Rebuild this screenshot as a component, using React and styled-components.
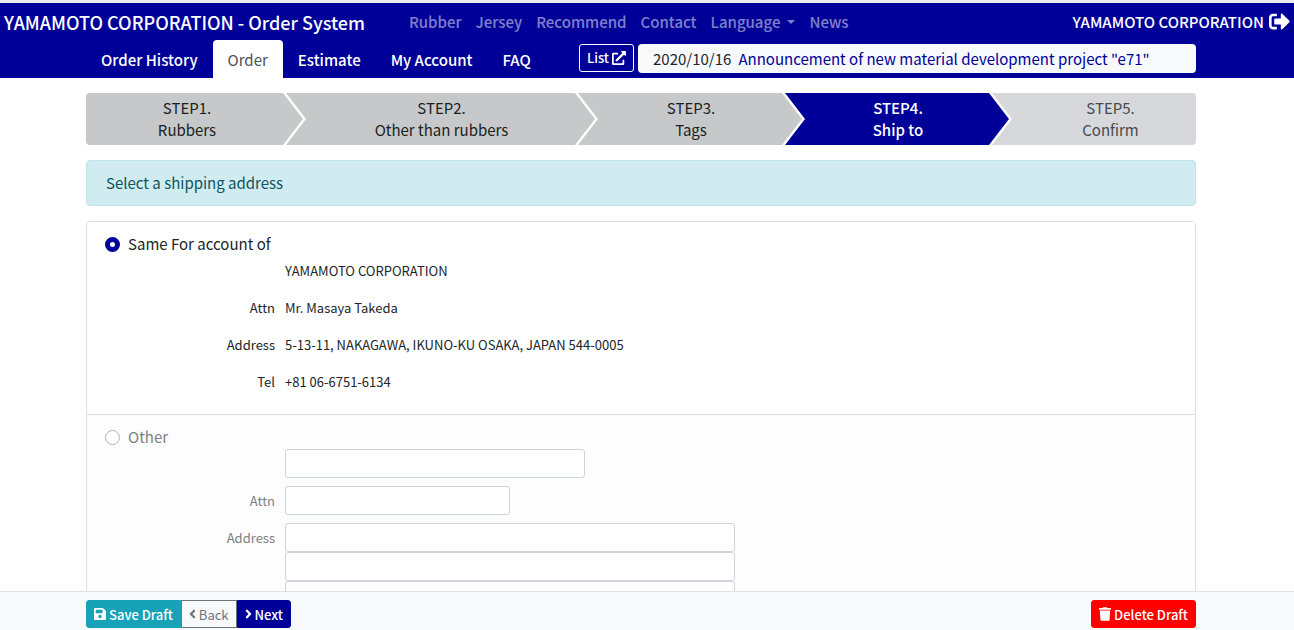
import React, { useState } from "react";
import styled, { createGlobalStyle } from "styled-components";
import {
  FaAngleLeft,
  FaAngleRight,
  FaExternalLinkAlt,
  FaSave,
  FaSignOutAlt,
  FaTrash,
} from "react-icons/fa";

const navy = "#000099";

const GlobalStyle = createGlobalStyle`
  *, *::before, *::after {
    box-sizing: border-box;
  }
  body {
    margin: 0;
    background: #fff;
    color: #212529;
    font-family: "Noto Sans CJK JP", "Noto Sans", sans-serif;
    font-size: 15px;
    line-height: 24px;
  }
  a {
    text-decoration: none;
    white-space: nowrap;
  }
  button, input {
    font-family: inherit;
  }
`;

const Page = styled.div`
  display: flex;
  flex-direction: column;
  height: 100vh;
`;

const Gutter = styled.div`
  padding: 0 12px 0 0;
`;
const Container = styled.div`
  max-width: 1110px;
  margin: 0 auto;
`;

const Header = styled.header`
  flex: none;
  background: ${navy};
  border-top: 3px solid #e9eaec;
`;
const TopBar = styled.div`
  display: flex;
  align-items: center;
  height: 37px;
  padding: 0 4px;
`;
const Brand = styled.a`
  color: #fff;
  font-size: 18px;
  font-weight: 500;
  margin-right: 44px;
`;
const TopLinks = styled.nav`
  display: flex;
  flex: 1;
  gap: 14px;
`;
const TopLink = styled.a`
  display: flex;
  align-items: center;
  gap: 7px;
  color: rgba(255, 255, 255, 0.5);
  font-weight: 500;
`;
const Caret = styled.span`
  border-top: 4px solid;
  border-left: 4px solid transparent;
  border-right: 4px solid transparent;
`;
const Account = styled.a`
  display: flex;
  align-items: center;
  gap: 5px;
  color: #fff;
  font-weight: 500;

  svg {
    font-size: 21px;
  }
`;

const TabBar = styled.div`
  display: flex;
  height: 38px;
`;
const Tabs = styled.nav`
  display: flex;
  flex: 1;
`;
const Tab = styled.a`
  padding: 7px 14px;
  border: 1px solid transparent;
  border-bottom: 0;
  border-radius: 4px 4px 0 0;
  background: ${(props) => (props.$active ? "#fff" : "transparent")};
  color: ${(props) => (props.$active ? "#495057" : "#fff")};
  font-weight: ${(props) => (props.$active ? 400 : 500)};
`;
const ListLink = styled.a`
  display: flex;
  align-items: center;
  gap: 3px;
  height: 28px;
  margin: 4px 4px 0 0;
  padding: 0 7px;
  border: 1px solid #fff;
  border-radius: 3px;
  color: #fff;
  font-size: 13px;
  font-weight: 500;

  svg {
    font-size: 14px;
  }
`;
const Notice = styled.div`
  display: flex;
  align-items: center;
  gap: 7px;
  width: 558px;
  height: 29px;
  margin-top: 4px;
  padding: 0 15px;
  border-radius: 4px;
  background: #f8f9fa;

  a {
    color: ${navy};
  }
`;

const Main = styled.main`
  flex: 1;
  min-height: 0;
  overflow-y: auto;
  scrollbar-width: none;
  padding: 15px 12px 0 0;
`;

const Steps = styled.ol`
  display: grid;
  grid-template-columns: 197fr 292fr 207fr 207fr 207fr;
  margin: 0 0 15px;
  padding: 0;
  list-style: none;
  border-radius: 4px;
  overflow: hidden;
`;
const stepColors = {
  done: "#c6c8ca",
  active: navy,
  next: "#d6d8db",
};
const textColors = {
  done: "#1b1e21",
  active: "#fff",
  next: "#464a4e",
};
const Step = styled.li`
  position: relative;
  padding: 4px 0 4px 25px;
  background: ${(props) => stepColors[props.$state]};
  color: ${(props) => textColors[props.$state]};
  font-weight: ${(props) => (props.$state === "active" ? 500 : 400)};
  line-height: 22px;
  text-align: center;

  &:first-child {
    padding-left: 5px;
  }
  &:last-child {
    padding-left: 36px;
  }
  &:not(:last-child)::before,
  &:not(:last-child)::after {
    content: "";
    position: absolute;
    z-index: 1;
    top: 0;
    left: 100%;
    height: 100%;
  }
  &::before {
    width: 23px;
    background: #fff;
    clip-path: polygon(0 0, 3px 0, 100% 50%, 3px 100%, 0 100%);
  }
  &::after {
    width: 20px;
    background: inherit;
    clip-path: polygon(0 0, 100% 50%, 0 100%);
  }
`;

const Alert = styled.div`
  margin-bottom: 15px;
  padding: 10px 19px;
  border: 1px solid #bee5eb;
  border-radius: 4px;
  background: #d1ecf1;
  color: #0c5460;
`;

const Card = styled.form`
  border: 1px solid #dfdfdf;
  border-radius: 4px;
  overflow: hidden;
`;
const Section = styled.section`
  padding: 10px 18px 18px;
  background: ${(props) => (props.$muted ? "#fdfdfd" : "#fff")};
  color: ${(props) => (props.$muted ? "#7c7f82" : "inherit")};

  & + & {
    border-top: 1px solid #dfdfdf;
  }
`;
const Choice = styled.label`
  display: flex;
  align-items: center;
  gap: 8px;
`;
const Radio = styled.input`
  appearance: none;
  width: 15px;
  height: 15px;
  margin: 0;
  border: 1px solid #adb5bd;
  border-radius: 50%;
  background: #fff;

  &:checked {
    border: 5px solid ${navy};
  }
`;
const Fields = styled.div`
  display: grid;
  grid-template-columns: 170px 1fr;
  column-gap: 10px;
  row-gap: 8px;
  font-size: 13px;
  line-height: 29px;
`;
const FieldName = styled.label`
  grid-column: 1;
  text-align: right;
`;
const FieldValue = styled.div`
  grid-column: 2;
  display: flex;
  flex-direction: column;
`;
const TextBox = styled.input`
  width: ${(props) => props.$width};
  max-width: 100%;
  height: 29px;
  padding: 4px 8px;
  border: 1px solid #ced4da;
  border-radius: 3px;
  background: #fff;
  font-size: 13px;
`;

const Footer = styled.footer`
  flex: none;
  padding: 8px 12px 2px 0;
  border-top: 1px solid #dee2e6;
  background: #f8f9fa;
`;
const FooterBar = styled(Container)`
  display: flex;
  justify-content: space-between;
`;
const ButtonGroup = styled.div`
  display: flex;

  button:first-child {
    border-radius: 3px 0 0 3px;
  }
  button:last-child {
    border-radius: 0 3px 3px 0;
  }
`;
const Button = styled.button`
  display: flex;
  align-items: center;
  gap: 3px;
  height: 28px;
  padding: 0 7px;
  border: 1px solid ${(props) => props.$border || props.$color};
  background: ${(props) => props.$color};
  color: ${(props) => props.$text || "#fff"};
  font-size: 13px;
  font-weight: ${(props) => (props.$text ? 400 : 500)};
  white-space: nowrap;
  cursor: pointer;

  svg {
    width: ${(props) => (props.$angle ? "7px" : "12px")};
    height: 14px;
  }
`;
const DeleteButton = styled(Button)`
  border-radius: 3px;
`;

const steps = [
  { name: "Rubbers", state: "done" },
  { name: "Other than rubbers", state: "done" },
  { name: "Tags", state: "done" },
  { name: "Ship to", state: "active" },
  { name: "Confirm", state: "next" },
];

const App = () => {
  const [shipTo, setShipTo] = useState("same");

  return (
    <Page>
      <GlobalStyle />
      <Header>
        <TopBar>
          <Brand href="#">YAMAMOTO CORPORATION - Order System</Brand>
          <TopLinks>
            <TopLink href="#">Rubber</TopLink>
            <TopLink href="#">Jersey</TopLink>
            <TopLink href="#">Recommend</TopLink>
            <TopLink href="#">Contact</TopLink>
            <TopLink href="#">
              Language <Caret />
            </TopLink>
            <TopLink href="#">News</TopLink>
          </TopLinks>
          <Account href="#">
            YAMAMOTO CORPORATION <FaSignOutAlt />
          </Account>
        </TopBar>
        <Gutter>
          <Container>
            <TabBar>
              <Tabs>
                <Tab href="#">Order History</Tab>
                <Tab href="#" $active>Order</Tab>
                <Tab href="#">Estimate</Tab>
                <Tab href="#">My Account</Tab>
                <Tab href="#">FAQ</Tab>
              </Tabs>
              <ListLink href="#">
                List <FaExternalLinkAlt />
              </ListLink>
              <Notice>
                <span>2020/10/16</span>
                <a href="#">Announcement of new material development project "e71"</a>
              </Notice>
            </TabBar>
          </Container>
        </Gutter>
      </Header>

      <Main>
        <Container>
          <Steps>
            {steps.map((step, i) => (
              <Step key={step.name} $state={step.state}>
                STEP{i + 1}.
                <br />
                {step.name}
              </Step>
            ))}
          </Steps>
          <Alert>Select a shipping address</Alert>
          <Card>
            <Section $muted={shipTo !== "same"}>
              <Choice>
                <Radio
                  type="radio"
                  name="shipTo"
                  checked={shipTo === "same"}
                  onChange={() => setShipTo("same")}
                />
                Same For account of
              </Choice>
              <Fields>
                <FieldValue>YAMAMOTO CORPORATION</FieldValue>
                <FieldName as="div">Attn</FieldName>
                <FieldValue>Mr. Masaya Takeda</FieldValue>
                <FieldName as="div">Address</FieldName>
                <FieldValue>5-13-11, NAKAGAWA, IKUNO-KU OSAKA, JAPAN 544-0005</FieldValue>
                <FieldName as="div">Tel</FieldName>
                <FieldValue>+81 06-6751-6134</FieldValue>
              </Fields>
            </Section>
            <Section $muted={shipTo !== "other"}>
              <Choice>
                <Radio
                  type="radio"
                  name="shipTo"
                  checked={shipTo === "other"}
                  onChange={() => setShipTo("other")}
                />
                Other
              </Choice>
              <Fields>
                <FieldValue>
                  <TextBox type="text" aria-label="Company" $width="300px" />
                </FieldValue>
                <FieldName htmlFor="attn">Attn</FieldName>
                <FieldValue>
                  <TextBox type="text" id="attn" $width="225px" />
                </FieldValue>
                <FieldName htmlFor="address">Address</FieldName>
                <FieldValue>
                  <TextBox type="text" id="address" $width="450px" />
                  <TextBox type="text" aria-label="Address line 2" $width="450px" />
                  <TextBox type="text" aria-label="Address line 3" $width="450px" />
                </FieldValue>
              </Fields>
            </Section>
          </Card>
        </Container>
      </Main>

      <Footer>
        <FooterBar>
          <ButtonGroup>
            <Button type="button" $color="#17a2b8">
              <FaSave /> Save Draft
            </Button>
            <Button type="button" $color="#f8f9fa" $border="#6c757d" $text="#6c757d" $angle>
              <FaAngleLeft /> Back
            </Button>
            <Button type="button" $color={navy} $angle>
              <FaAngleRight /> Next
            </Button>
          </ButtonGroup>
          <DeleteButton type="button" $color="#ff0000">
            <FaTrash /> Delete Draft
          </DeleteButton>
        </FooterBar>
      </Footer>
    </Page>
  );
};

export default App;
